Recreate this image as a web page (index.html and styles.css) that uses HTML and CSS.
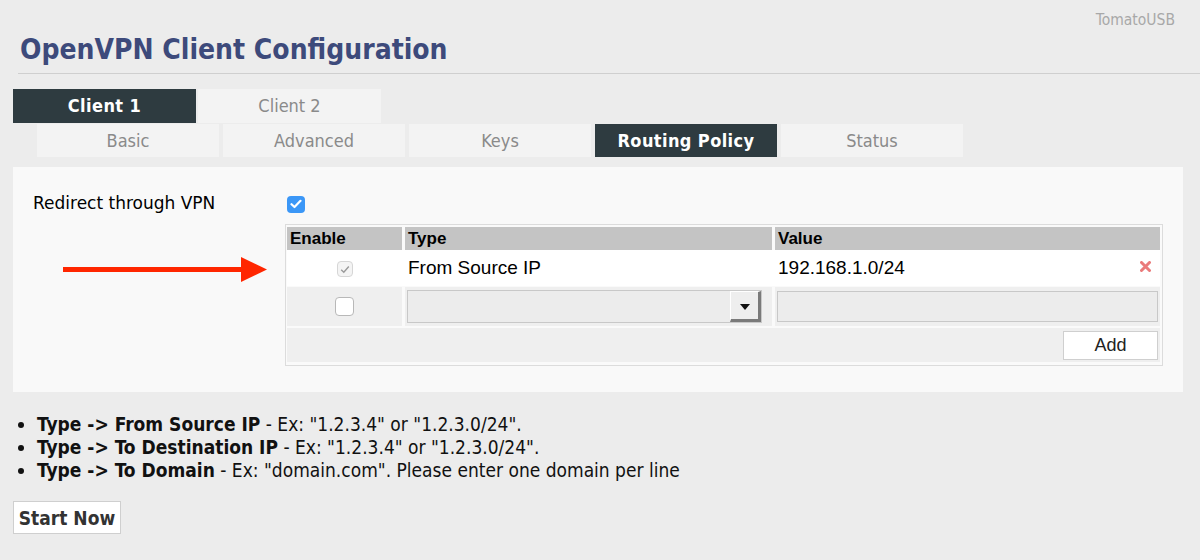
FILE: index.html
```html
<!DOCTYPE html>
<html>
<head>
<meta charset="utf-8">
<link rel="stylesheet" href="styles.css">
</head>
<body>
<div class="brand">TomatoUSB</div>
<h1 class="title">OpenVPN Client Configuration</h1>
<div class="rule"></div>
<div class="tabs tabs-main">
  <div class="tab active">Client 1</div>
  <div class="tab">Client 2</div>
</div>
<div class="tabs tabs-sub">
  <div class="tab">Basic</div>
  <div class="tab">Advanced</div>
  <div class="tab">Keys</div>
  <div class="tab active">Routing Policy</div>
  <div class="tab">Status</div>
</div>
<div class="panel">
  <div class="field">
    <div class="label">Redirect through VPN</div>
    <span class="cb cb-blue"><svg width="12" height="10" viewBox="0 0 12 10"><path d="M1.5 5.2 L4.5 8 L10.5 1.8" fill="none" stroke="#fff" stroke-width="2.2" stroke-linecap="round" stroke-linejoin="round"/></svg></span>
  </div>
  <div class="arrow-wrap">
    <svg class="arrow" width="204" height="25" viewBox="0 0 204 25"><rect x="0" y="10" width="180" height="5" fill="#ff2600"/><polygon points="178,0 204,12.5 178,25" fill="#ff2600"/></svg>
    <div class="grid">
      <div class="hd">Enable</div>
      <div class="hd">Type</div>
      <div class="hd">Value</div>
      <div class="r1 c-center"><span class="cb cb-dis"><svg width="10" height="9" viewBox="0 0 10 9"><path d="M1.2 4.8 L3.8 7.3 L8.8 1.5" fill="none" stroke="#999" stroke-width="1.4"/></svg></span></div>
      <div class="r1">From Source IP</div>
      <div class="r1 r1-val"><span>192.168.1.0/24</span><svg class="del" width="11" height="11" viewBox="0 0 11 11"><path d="M1.5 1.5 L9.5 9.5 M9.5 1.5 L1.5 9.5" stroke="#ea7b7b" stroke-width="3" stroke-linecap="round"/></svg></div>
      <div class="r2 c-center"><span class="cb cb-empty"></span></div>
      <div class="r2"><div class="select"><span class="sel-btn"><span class="tri"></span></span></div></div>
      <div class="r2"><div class="input"></div></div>
      <div class="r3"><button class="btn-add">Add</button></div>
    </div>
  </div>
</div>
<ul class="notes">
  <li><b>Type -&gt; From Source IP</b> - Ex: "1.2.3.4" or "1.2.3.0/24".</li>
  <li><b>Type -&gt; To Destination IP</b> - Ex: "1.2.3.4" or "1.2.3.0/24".</li>
  <li><b>Type -&gt; To Domain</b> - Ex: "domain.com". Please enter one domain per line</li>
</ul>
<button class="btn-start">Start Now</button>
</body>
</html>
```
FILE: styles.css
```css
html, body {
  margin: 0;
  padding: 0;
}
body {
  background: #ececec;
  font-family: "DejaVu Sans Condensed", "DejaVu Sans", sans-serif;
  color: #000;
  width: 1200px;
  height: 560px;
  overflow: hidden;
}
.brand {
  text-align: right;
  padding: 11px 25px 0 0;
  font-size: 15.5px;
  color: #a8a8a8;
  height: 21px;
}
.title {
  margin: 0 0 0 20px;
  font-size: 28px;
  font-weight: bold;
  color: #3d4a7b;
  height: 41px;
  line-height: 36px;
}
.rule {
  margin-left: 18px;
  height: 1px;
  background: #cfcfcf;
}
.tabs {
  display: flex;
}
.tabs-main {
  margin: 15px 0 0 13px;
  gap: 2px;
}
.tabs-main .tab {
  width: 183px;
  height: 34px;
  line-height: 34px;
  font-size: 18px;
}
.tabs-sub {
  margin: 1px 0 0 37px;
  gap: 4px;
}
.tabs-sub .tab {
  width: 182px;
  height: 33px;
  line-height: 33px;
  font-size: 18px;
}
.tab {
  background: #f3f3f3;
  color: #8a8a8a;
  text-align: center;
}
.tab.active {
  background: #2e3b40;
  color: #fff;
  font-weight: bold;
  letter-spacing: 0.4px;
}
.panel {
  margin: 10px 0 0 13px;
  width: 1170px;
  height: 225px;
  background: #f9f9f9;
  box-sizing: border-box;
  padding-top: 26px;
}
.field {
  display: flex;
  align-items: center;
  height: 20px;
}
.label {
  margin-left: 20px;
  width: 254px;
  font-size: 17px;
  font-family: "DejaVu Sans", sans-serif;
}
.cb {
  display: inline-flex;
  align-items: center;
  justify-content: center;
  box-sizing: border-box;
  border-radius: 4px;
}
.cb-blue {
  width: 18px;
  height: 17px;
  background: #3b97f7;
  margin-top: 2px;
}
.arrow-wrap {
  display: flex;
  align-items: flex-start;
  margin-top: 11px;
}
.arrow {
  margin: 33px 0 0 50px;
  flex: none;
}
.grid {
  margin-left: 18px;
  width: 878px;
  box-sizing: border-box;
  border: 1px solid #dcdcdc;
  background: #fafafa;
  padding: 2px 2px 3px 1px;
  display: grid;
  grid-template-columns: 115px 367px 385px;
  column-gap: 3px;
  font-family: "Liberation Sans", Arial, sans-serif;
}
.hd {
  background: #c4c4c4;
  font-weight: bold;
  font-size: 17px;
  height: 23px;
  line-height: 23px;
  padding-left: 3px;
}
.r1 {
  background: #fff;
  height: 36px;
  line-height: 36px;
  font-size: 19px;
  padding-left: 3px;
  margin-right: -3px;
  padding-right: 3px;
}
.r1-val {
  display: flex;
  justify-content: space-between;
  align-items: center;
  padding-right: 9px !important;
  margin-right: 0;
}
.del {
  margin-top: -3px;
}
.c-center {
  display: flex;
  align-items: center;
  justify-content: center;
  padding-left: 0;
}
.cb-dis {
  width: 16px;
  height: 16px;
  border: 1px solid #d6d6d6;
  background: #f4f4f4;
  margin-top: 2px;
}
.r2 {
  background: #efefef;
  height: 39px;
  margin-top: 1px;
  display: flex;
  align-items: center;
  padding: 0 2px;
}
.cb-empty {
  width: 19px;
  height: 19px;
  border: 1px solid #b8b8b8;
  background: #fff;
  border-radius: 4px;
}
.r2.c-center { padding: 0; }
.select {
  flex: 1;
  height: 33px;
  box-sizing: border-box;
  border: 1px solid #c8c8c8;
  background: #ececec;
  display: flex;
  justify-content: flex-end;
  margin-right: 8px;
}
.sel-btn {
  width: 31px;
  height: 31px;
  box-sizing: border-box;
  background: #eeeeee;
  border-right: 3px solid #7a7a7a;
  border-bottom: 3px solid #7a7a7a;
  border-top: 1px solid #fff;
  border-left: 1px solid #fff;
  display: flex;
  align-items: center;
  justify-content: center;
}
.tri {
  width: 0;
  height: 0;
  border-left: 5px solid transparent;
  border-right: 5px solid transparent;
  border-top: 6px solid #111;
  margin-top: 2px;
}
.input {
  flex: 1;
  height: 31px;
  box-sizing: border-box;
  border: 1px solid #c8c8c8;
  background: #ececec;
}
.r3 {
  grid-column: 1 / 4;
  background: #efefef;
  height: 34px;
  margin-top: 2px;
  display: flex;
  align-items: center;
  justify-content: flex-end;
  padding-right: 2px;
}
.btn-add {
  width: 95px;
  height: 29px;
  background: #fff;
  border: 1px solid #cfcfcf;
  font-family: "Liberation Sans", Arial, sans-serif;
  font-size: 18px;
  color: #222;
  padding: 0;
}
.notes {
  margin: 21px 0 0 0;
  padding: 0 0 0 37px;
  font-family: "Liberation Sans Narrow", "DejaVu Sans Condensed", sans-serif;
  font-size: 19px;
  line-height: 23px;
  color: #111;
}
.notes li {
  list-style: disc;
}
.btn-start {
  margin: 19px 0 0 13px;
  width: 108px;
  height: 33px;
  background: #fff;
  border: 1px solid #cfcfcf;
  font-family: "Liberation Sans Narrow", "DejaVu Sans Condensed", sans-serif;
  font-weight: bold;
  font-size: 19px;
  color: #333;
  padding: 0;
}
```
